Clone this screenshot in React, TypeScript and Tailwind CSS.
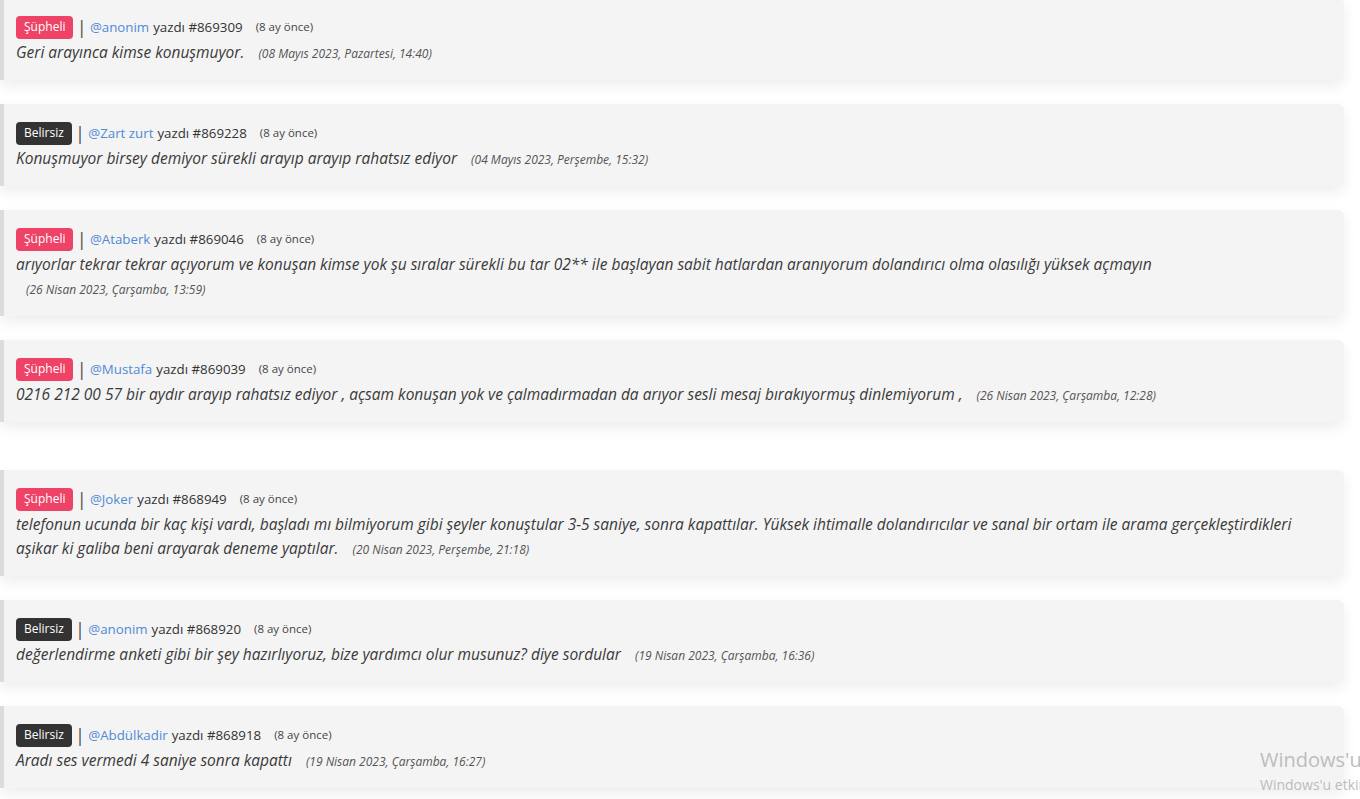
import React from "react";

type Item = {
  tag: "Şüpheli" | "Belirsiz";
  user: string;
  id: string;
  text: string;
  date: string;
  extraTop?: boolean;
};

const items: Item[] = [
  { tag: "Şüpheli", user: "@anonim", id: "#869309", text: "Geri arayınca kimse konuşmuyor.", date: "(08 Mayıs 2023, Pazartesi, 14:40)" },
  { tag: "Belirsiz", user: "@Zart zurt", id: "#869228", text: "Konuşmuyor birsey demiyor sürekli arayıp arayıp rahatsız ediyor", date: "(04 Mayıs 2023, Perşembe, 15:32)" },
  { tag: "Şüpheli", user: "@Ataberk", id: "#869046", text: "arıyorlar tekrar tekrar açıyorum ve konuşan kimse yok şu sıralar sürekli bu tar 02** ile başlayan sabit hatlardan aranıyorum dolandırıcı olma olasılığı yüksek açmayın", date: "(26 Nisan 2023, Çarşamba, 13:59)" },
  { tag: "Şüpheli", user: "@Mustafa", id: "#869039", text: "0216 212 00 57 bir aydır arayıp rahatsız ediyor , açsam konuşan yok ve çalmadırmadan da arıyor sesli mesaj bırakıyormuş dinlemiyorum ,", date: "(26 Nisan 2023, Çarşamba, 12:28)" },
  { tag: "Şüpheli", user: "@Joker", id: "#868949", text: "telefonun ucunda bir kaç kişi vardı, başladı mı bilmiyorum gibi şeyler konuştular 3-5 saniye, sonra kapattılar. Yüksek ihtimalle dolandırıcılar ve sanal bir ortam ile arama gerçekleştirdikleri aşikar ki galiba beni arayarak deneme yaptılar.", date: "(20 Nisan 2023, Perşembe, 21:18)", extraTop: true },
  { tag: "Belirsiz", user: "@anonim", id: "#868920", text: "değerlendirme anketi gibi bir şey hazırlıyoruz, bize yardımcı olur musunuz? diye sordular", date: "(19 Nisan 2023, Çarşamba, 16:36)" },
  { tag: "Belirsiz", user: "@Abdülkadir", id: "#868918", text: "Aradı ses vermedi 4 saniye sonra kapattı", date: "(19 Nisan 2023, Çarşamba, 16:27)" },
];

function Card({ it }: { it: Item }) {
  return (
    <div
      className={`w-[1344px] bg-[#f4f4f4] border-l-4 border-[#dcdcdc] rounded-r-[6px] shadow-[0_6px_14px_rgba(0,0,0,0.07)] pl-3 pr-4 pt-4 pb-4 ${
        it.extraTop ? "mt-12" : "mt-6"
      } first:mt-0`}
    >
      <div className="flex items-center h-[26px] text-[13.3px] leading-[20px] text-[#333]">
        <span
          className={`inline-flex items-center justify-center h-[23px] px-[8px] rounded-[4px] text-[12px] text-white ${
            it.tag === "Şüpheli" ? "bg-[#ee4266]" : "bg-[#333333]"
          }`}
        >
          {it.tag}
        </span>
        <span className="mx-[3px] text-[19px] leading-none text-[#555]">|</span>
        <span className="text-[#4f8ad4]">{it.user}</span>
        <span className="ml-[4px]">yazdı {it.id}</span>
        <span className="ml-[13px] text-[11.5px] text-[#444]">(8 ay önce)</span>
      </div>
      <p className="text-[15.5px] leading-[24px] italic text-[#3a3a3a]">
        {it.text}{" "}
        <span className="inline-block whitespace-nowrap ml-[10px] text-[12px] leading-[16px] text-[#555]">
          {it.date}
        </span>
      </p>
    </div>
  );
}

export default function App() {
  return (
    <div
      className="relative w-[1360px] h-[799px] overflow-hidden bg-white"
      style={{ fontFamily: "'Open Sans', 'Noto Sans', sans-serif" }}
    >
      <div className="flex flex-col -mt-[2px]">
        {items.map((it, i) => (
          <Card key={i} it={it} />
        ))}
      </div>
      <div className="absolute left-[1260px] top-[750px] whitespace-nowrap text-[#bdbdbd] leading-none">
        <div className="text-[20px]">Windows'u etkinleştir</div>
        <div className="text-[14px] mt-[8px]">Windows'u etkinleştirmek için Ayarlar'a gidin.</div>
      </div>
    </div>
  );
}
